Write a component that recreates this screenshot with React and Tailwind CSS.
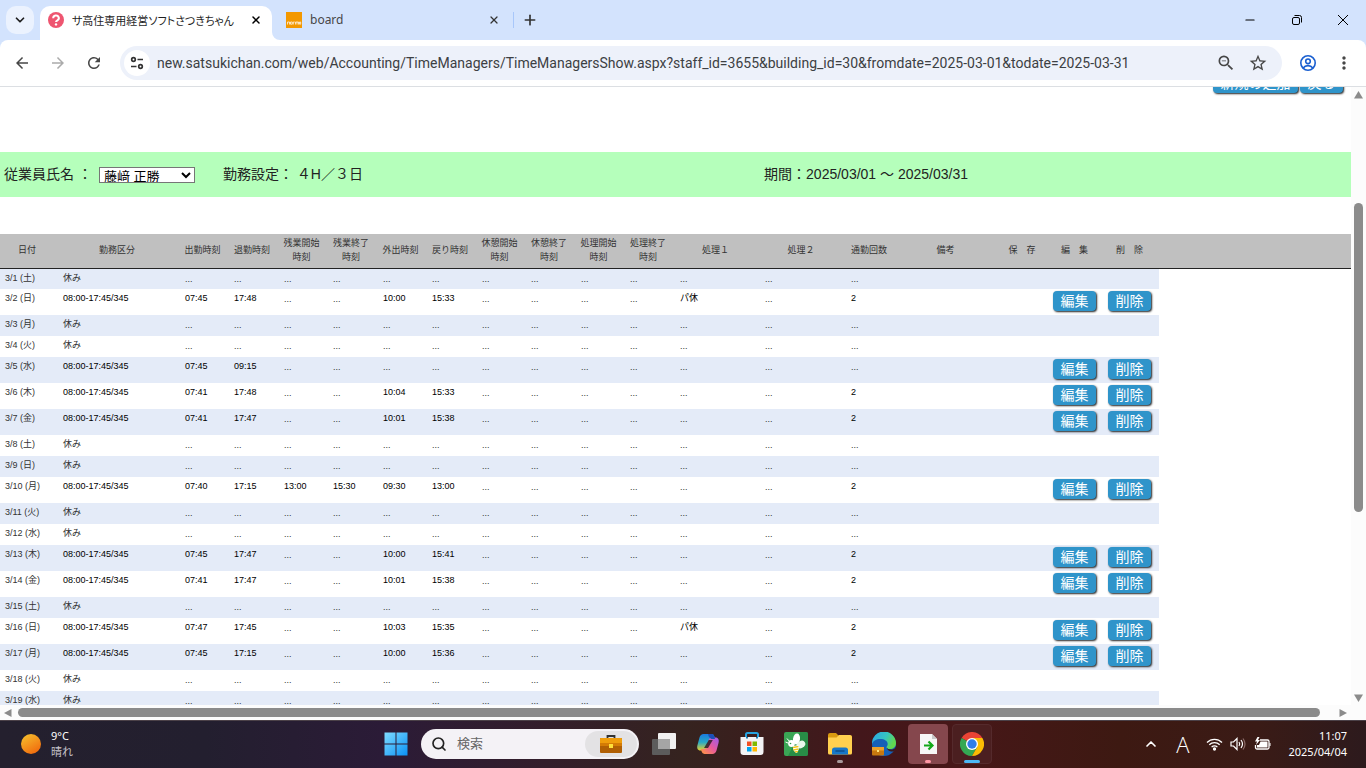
import { useState } from 'react'
import { ChevronDown, ChevronUp, Minus, Plus, Search, X } from 'lucide-react'
import { MdArrowBack, MdArrowForward, MdRefresh, MdZoomOut, MdStarOutline, MdMoreVert } from 'react-icons/md'

const DOTS = '...'
const WORK = '08:00-17:45/345'

// [date, in, out, overtime start, overtime end, leave, back, process 1, commute count]
const WORK_ROWS = [
  ['3/1 (土)'],
  ['3/2 (日)', '07:45', '17:48', '', '', '10:00', '15:33', 'パ休', '2'],
  ['3/3 (月)'],
  ['3/4 (火)'],
  ['3/5 (水)', '07:45', '09:15', '', '', '', '', '', ''],
  ['3/6 (木)', '07:41', '17:48', '', '', '10:04', '15:33', '', '2'],
  ['3/7 (金)', '07:41', '17:47', '', '', '10:01', '15:38', '', '2'],
  ['3/8 (土)'],
  ['3/9 (日)'],
  ['3/10 (月)', '07:40', '17:15', '13:00', '15:30', '09:30', '13:00', '', '2'],
  ['3/11 (火)'],
  ['3/12 (水)'],
  ['3/13 (木)', '07:45', '17:47', '', '', '10:00', '15:41', '', '2'],
  ['3/14 (金)', '07:41', '17:47', '', '', '10:01', '15:38', '', '2'],
  ['3/15 (土)'],
  ['3/16 (日)', '07:47', '17:45', '', '', '10:03', '15:35', 'パ休', '2'],
  ['3/17 (月)', '07:45', '17:15', '', '', '10:00', '15:36', '', '2'],
  ['3/18 (火)'],
  ['3/19 (水)'],
]

const COLUMNS = [
  { label: '日付', width: 'w-[58px]' },
  { label: '勤務区分', width: 'w-[122px]' },
  { label: '出勤時刻', width: 'w-[49px]' },
  { label: '退勤時刻', width: 'w-[50px]' },
  { label: '残業開始時刻', width: 'w-[49px]' },
  { label: '残業終了時刻', width: 'w-[50px]' },
  { label: '外出時刻', width: 'w-[49px]' },
  { label: '戻り時刻', width: 'w-[50px]' },
  { label: '休憩開始時刻', width: 'w-[49px]' },
  { label: '休憩終了時刻', width: 'w-[50px]' },
  { label: '処理開始時刻', width: 'w-[49px]' },
  { label: '処理終了時刻', width: 'w-[50px]' },
  { label: '処理１', width: 'w-[85px]' },
  { label: '処理２', width: 'w-[86px]' },
  { label: '通勤回数', width: 'w-[50px]' },
  { label: '備考', width: 'w-[103px]' },
  { label: '保　存', width: 'w-[50px]' },
  { label: '編　集', width: 'w-[55px]' },
  { label: '削　除', width: 'w-[55px]' },
]

function BlueButton({ children, wide }) {
  return (
    <button
      type="button"
      className={`block h-5 rounded bg-[#2f94ca] text-center text-sm leading-[18px] whitespace-nowrap text-white shadow-[1px_1px_2px_#222] ${wide ? 'w-[85px]' : 'w-[43px]'}`}
    >
      {children}
    </button>
  )
}

function TabBar() {
  return (
    <div className="flex h-10 shrink-0 items-end bg-[#d3e3fd] pl-1.5">
      <button type="button" aria-label="タブを検索" className="mb-1.5 flex size-7 items-center justify-center rounded-[10px] bg-[#ebf2fe]">
        <ChevronDown className="size-3.5 text-[#1f1f1f]" strokeWidth={3} />
      </button>
      <div className="ml-1.5 flex h-[34px] w-[232px] items-center rounded-t-[10px] bg-white pr-2.5 pb-1.5 pl-2">
        <svg className="size-4 shrink-0" viewBox="0 0 16 16">
          <circle cx="8" cy="8" r="8" fill="#ee5570" />
          <path d="M5.2 6.2a2.8 2.6 0 1 1 4.2 2.2c-1 .6-1.4.9-1.4 1.7" fill="none" stroke="#fff" strokeWidth="2" />
          <circle cx="8" cy="12.4" r="1.2" fill="#fff" />
        </svg>
        <span className="ml-2 grow overflow-hidden text-[11px] leading-4 whitespace-nowrap text-[#1f1f1f] [font-feature-settings:'palt']">サ高住専用経営ソフトさつきちゃん</span>
        <button type="button" aria-label="閉じる" className="shrink-0">
          <X className="size-3" strokeWidth={3} />
        </button>
      </div>
      <svg className="size-2 shrink-0" viewBox="0 0 8 8"><path d="M0 0a8 8 0 0 0 8 8H0z" fill="#fff" /></svg>
      <div className="flex h-[34px] w-[226px] items-center pr-1.5 pb-1.5 pl-1.5">
        <svg className="size-4 shrink-0" viewBox="0 0 16 16">
          <rect width="16" height="16" fill="#f39800" />
          <path d="M1.500 12.500v-2.500h2v2.500M4.500 10h1.800v2.200H4.500zM7.300 12.500V10h1.400M9.500 12.500V10h3v2.500M11 10v2.500M13.500 10h1.200v2.200h-1.200z" fill="none" stroke="#fff" strokeWidth=".7" />
        </svg>
        <span className="ml-2 grow font-['Noto_Sans'] text-xs text-[#474747]">board</span>
        <button type="button" aria-label="閉じる" className="shrink-0">
          <X className="size-3 text-[#333]" strokeWidth={2.5} />
        </button>
      </div>
      <div className="mb-3 ml-[7px] h-4 w-px bg-[#a8c7fa]" />
      <button type="button" aria-label="新しいタブ" className="mb-3 ml-2">
        <Plus className="size-4 text-[#333]" strokeWidth={2.5} />
      </button>
      <div className="mb-[13px] ml-auto flex items-center gap-[34px] pr-[17px] text-black">
        <button type="button" aria-label="最小化"><Minus className="size-3.5" strokeWidth={2} /></button>
        <button type="button" aria-label="元に戻す">
          <svg className="size-3" viewBox="0 0 12 12" fill="none" stroke="currentColor">
            <rect x="1.500" y="3.500" width="7" height="7" rx="1.500" />
            <path d="M3.500 1.500h5a2 2 0 0 1 2 2v5" />
          </svg>
        </button>
        <button type="button" aria-label="閉じる">
          <svg className="size-3" viewBox="0 0 12 12" stroke="currentColor"><path d="M1 1l10 10M11 1L1 11" /></svg>
        </button>
      </div>
    </div>
  )
}

function Toolbar() {
  const [url, setUrl] = useState('new.satsukichan.com/web/Accounting/TimeManagers/TimeManagersShow.aspx?staff_id=3655&building_id=30&fromdate=2025-03-01&todate=2025-03-31')
  return (
    <div className="shrink-0 bg-[#d3e3fd]">
      <div className="flex h-[47px] items-center rounded-t-lg border-b border-[#dcdfe3] bg-white pr-3 pl-3 text-[#474747]">
        <button type="button" aria-label="戻る" className="px-px"><MdArrowBack className="size-[18px]" /></button>
        <button type="button" aria-label="進む" className="ml-4 px-px text-[#ababab]"><MdArrowForward className="size-[18px]" /></button>
        <button type="button" aria-label="再読み込み" className="ml-4 px-px"><MdRefresh className="size-[18px]" /></button>
        <div className="ml-4 flex h-[34px] grow items-center rounded-full bg-[#edf1fa] pr-3.5 pl-1">
          <button type="button" aria-label="サイト情報" className="flex size-[26px] shrink-0 items-center justify-center rounded-full bg-white">
            <svg className="size-4" viewBox="0 0 16 16" fill="none" stroke="#333" strokeWidth="1.700">
              <circle cx="4.500" cy="4.500" r="1.800" />
              <path d="M8.500 4.500H14M2 11.500h5.500" />
              <circle cx="11.500" cy="11.500" r="1.800" />
            </svg>
          </button>
          <input
            aria-label="アドレス"
            value={url}
            onChange={(e) => setUrl(e.target.value)}
            className="ml-[7px] min-w-0 grow bg-transparent font-['Roboto'] text-sm text-[#3c4043] outline-none"
          />
          <MdZoomOut className="size-5" />
          <MdStarOutline className="ml-3 size-5" />
        </div>
        <button type="button" aria-label="アカウント" className="ml-[18px]">
          <svg className="size-4" viewBox="0 0 16 16" fill="none" stroke="#1a5fd0" strokeWidth="1.600">
            <circle cx="8" cy="8" r="7.200" />
            <circle cx="8" cy="6.300" r="2.300" />
            <path d="M3.200 13c1.200-1.700 2.900-2.400 4.800-2.400s3.600.7 4.800 2.400" />
          </svg>
        </button>
        <button type="button" aria-label="メニュー" className="ml-[18px]"><MdMoreVert className="size-5" /></button>
      </div>
    </div>
  )
}

function TimeTable() {
  return (
    <table className="w-full min-w-[1159px] table-fixed border-collapse text-[9px] leading-[14px] text-[#333]">
      <colgroup>
        {COLUMNS.map((c) => <col key={c.label} className={c.width} />)}
        <col />
      </colgroup>
      <thead>
        <tr className="h-[34px] border-b border-[#222] bg-[#c0c0c0]">
          {COLUMNS.map((c) => <th key={c.label} className="p-0 pr-1 pb-0.5 text-center font-normal"><span className="mx-auto block w-9">{c.label}</span></th>)}
          <th />
        </tr>
      </thead>
      <tbody>
        {WORK_ROWS.map(([date, ...v]) => {
          const off = v.length === 0
          const [start, end, otStart, otEnd, leave, back, process, count] = v
          const cells = [start, end, otStart, otEnd, leave, back, '', '', '', '', process, '', count]
          return (
            <tr key={date} className={`align-top odd:bg-[#e4ebf8] ${off ? 'h-[21px]' : 'h-[26px]'}`}>
              <td className="pt-0.5 pl-[5px] whitespace-nowrap">{date}</td>
              <td className={`pt-0.5 pl-[5px] ${off ? '' : 'text-black'}`}>{off ? '休み' : WORK}</td>
              {cells.map((c, i) => (
                <td key={i} className={`pl-[5px] ${c ? 'pt-0.5 text-black' : 'pt-[3px]'}`}>{c || DOTS}</td>
              ))}
              <td />
              <td />
              <td className="pt-0.5 pl-1">{!off && <BlueButton>編集</BlueButton>}</td>
              <td className="pt-0.5 pl-1">{!off && <BlueButton>削除</BlueButton>}</td>
              <td className="bg-white" />
            </tr>
          )
        })}
      </tbody>
    </table>
  )
}

function Page() {
  return (
    <div className="flex min-h-0 grow bg-white">
      <div className="flex min-w-0 grow flex-col">
        <div className="min-h-0 grow overflow-hidden font-['Liberation_Sans','Noto_Sans_CJK_JP',sans-serif] text-sm text-[#222]">
          <div className="-mt-3.5 flex h-[79px] justify-end gap-0.5 pr-2">
            <BlueButton wide>新規の追加</BlueButton>
            <BlueButton>戻る</BlueButton>
          </div>
          <div className="flex h-[45px] items-center bg-[#b5ffbb] px-1 pb-0.5 whitespace-nowrap">
            <div className="flex w-[56%] items-center">
              <label htmlFor="staff">従業員氏名 ：</label>
              <select id="staff" defaultValue="1" className="mt-0.5 ml-[7px] h-4 w-24 border border-[#767676] bg-white text-[13px] leading-[14px] text-black">
                <option value="1">藤﨑 正勝</option>
              </select>
              <span className="ml-7">勤務設定： ４H／３日</span>
            </div>
            <div className="pl-2">期間：2025/03/01 ～ 2025/03/31</div>
          </div>
          <div className="mt-[37px]">
            <TimeTable />
          </div>
        </div>
        {/* horizontal scrollbar */}
        <div className="flex h-[15px] shrink-0 items-center bg-[#fcfcfc] px-1">
          <svg className="size-2 shrink-0" viewBox="0 0 8 8"><path d="M7.500 0v8L0 4z" fill="#8b8b8b" /></svg>
          <div className="mr-[19px] ml-1.5 h-[9px] grow rounded-full bg-[#8b8b8b]" />
          <svg className="size-2 shrink-0" viewBox="0 0 8 8"><path d="M.5 0v8L8 4z" fill="#8b8b8b" /></svg>
        </div>
      </div>
      {/* vertical scrollbar */}
      <div className="flex w-[15px] shrink-0 flex-col items-center bg-[#fcfcfc] pt-1 pb-[18px]">
        <svg className="h-2 w-[9px] shrink-0" viewBox="0 0 9 8"><path d="M0 7.500h9L4.500 0z" fill="#8b8b8b" /></svg>
        <div className="flex w-[9px] grow flex-col">
          <div className="grow-4" />
          <div className="h-[52%] rounded-full bg-[#8b8b8b]" />
          <div className="grow-7" />
        </div>
        <svg className="h-2 w-[9px] shrink-0" viewBox="0 0 9 8"><path d="M0 .5h9L4.500 8z" fill="#8b8b8b" /></svg>
      </div>
    </div>
  )
}

function CopilotIcon() {
  return (
    <svg className="size-6" viewBox="0 0 24 24">
      <defs>
        <linearGradient id="cpA" x1="0" y1="0" x2="0" y2="1"><stop stopColor="#1a7be0" /><stop offset=".5" stopColor="#28a9c6" /><stop offset="1" stopColor="#e8d12c" /></linearGradient>
        <linearGradient id="cpB" x1="1" y1="0" x2="0" y2="1"><stop stopColor="#9a5cf0" /><stop offset=".5" stopColor="#e85a9c" /><stop offset="1" stopColor="#ff9a3c" /></linearGradient>
      </defs>
      <path d="M14 2h1.500a3 3 0 0 1 2.800 2.200L19 7h-3c-1.500 0-2.300.7-2.700 2l-2 7c-.5 1.600-1.500 2.500-3 2.500H4.500C1.500 18.500.7 16 1.500 13l2-7.500C4.200 3.200 5.500 2 7.500 2z" fill="url(#cpA)" />
      <path d="M10 22H8.500a3 3 0 0 1-2.800-2.200L5 17h3c1.500 0 2.300-.7 2.700-2l2-7c.5-1.600 1.500-2.500 3-2.500h3.800c3 0 3.800 2.500 3 5.500l-2 7.500c-.7 2.300-2 3.500-4 3.500z" fill="url(#cpB)" />
      <path d="M12.800 8h4L12 16H8z" fill="#2b2024" opacity=".85" />
      <path d="M12 2h3.500a3 3 0 0 1 2.800 2.200L19 7h-3.500C13 6 12.500 4 12 2z" fill="#1c4fb8" />
    </svg>
  )
}

function StoreIcon() {
  return (
    <svg className="size-6" viewBox="0 0 24 24">
      <path d="M6 6V2.500A1.500 1.500 0 0 1 7.500 1h9A1.500 1.500 0 0 1 18 2.500V6" fill="none" stroke="#27a3e0" strokeWidth="2" />
      <path d="M.5 5h23v15a3 3 0 0 1-3 3h-17a3 3 0 0 1-3-3z" fill="#f3f3f5" />
      <path d="M6 5h2v1.500H6zM16 5h2v1.500h-2z" fill="#1b7fb8" />
      <path d="M7 9.500h4.500V14H7z" fill="#f25022" />
      <path d="M12.500 9.500H17V14h-4.500z" fill="#7fba00" />
      <path d="M7 15h4.500v4.500H7z" fill="#00a4ef" />
      <path d="M12.500 15H17v4.500h-4.500z" fill="#ffb900" />
    </svg>
  )
}

function BeeIcon() {
  return (
    <svg className="size-6" viewBox="0 0 24 24">
      <rect width="24" height="24" rx="2" fill="#3aa655" />
      <path d="M16 0h6a2 2 0 0 1 2 2v20a2 2 0 0 1-2 2H4z" fill="#1c7d3c" opacity=".6" />
      <ellipse cx="12.500" cy="7" rx="3.500" ry="5.500" fill="#fff" transform="rotate(8 12.500 7)" />
      <ellipse cx="17" cy="12.500" rx="4.500" ry="3.500" fill="#e9f7ec" transform="rotate(-30 17 12.500)" />
      <circle cx="7.500" cy="11.500" r="3.400" fill="#fff" />
      <path d="M3 6.500l2.500 3M1.500 10l2.500 1" stroke="#fff" strokeWidth="1" />
      <circle cx="6.500" cy="11.500" r=".8" fill="#2f9a4c" />
      <path d="M9 14l5.500-1c1.500 3-.5 6-1.500 8-3-1-4.500-4-4-7z" fill="#fff" />
      <path d="M9 15.500l5.500-1M9.500 18l5-1M11 20l3-.7" stroke="#f5c518" strokeWidth="1.300" />
    </svg>
  )
}

function FolderIcon() {
  return (
    <svg className="size-6" viewBox="0 0 24 24">
      <path d="M0 3a2 2 0 0 1 2-2h6l2.500 2.500H22a2 2 0 0 1 2 2V10H0z" fill="#d99a10" />
      <path d="M0 5.500h8.500L11 3h11a2 2 0 0 1 2 2v16a1.500 1.500 0 0 1-1.500 1.500h-21A1.500 1.500 0 0 1 0 21z" fill="#ffd04f" />
      <path d="M4 22.500V18a2.500 2.500 0 0 1 2.500-2.500h11A2.500 2.500 0 0 1 20 18v4.500z" fill="#1777c8" />
      <path d="M8 19h8" stroke="#0f4f8c" strokeWidth="1.500" strokeLinecap="round" />
    </svg>
  )
}

function EdgeIcon() {
  return (
    <svg className="size-6" viewBox="0 0 24 24">
      <defs>
        <linearGradient id="edA" x1="0" y1="0" x2="1" y2=".4"><stop stopColor="#2aa5e8" /><stop offset=".6" stopColor="#36c5c0" /><stop offset="1" stopColor="#62d84e" /></linearGradient>
      </defs>
      <circle cx="12" cy="12" r="12" fill="#1560b8" />
      <path d="M0 12a12 12 0 0 1 24-1c0 4-3 6-6 6-2 0-3.500-.8-3.500-1.800 0-.8 1.200-1.200 1.200-3.200C15.700 9 12.500 7 8.500 7 4 7 1 9 0 12z" fill="url(#edA)" />
      <path d="M15 15.500c0 1 1.500 2 4 2 1.500 0 3-.5 4-1.300L24 15c-.5 2-1.500 3.500-2.500 4.500-3 .5-6.500-1-6.500-4z" fill="#3b1a1c" />
      <rect y="15" width="12" height="8.500" rx="1" fill="#c8780f" />
      <rect y="15" width="12" height="3.500" fill="#eba12b" />
      <rect x="5" y="18" width="2" height="2" fill="#ffe27a" />
    </svg>
  )
}

function ChromeIcon() {
  return (
    <svg className="size-6" viewBox="0 0 24 24">
      <path d="M12 12L1.600 6A12 12 0 0 1 22.400 6z" fill="#ea4335" />
      <path d="M12 12L1.600 6A12 12 0 0 0 12 24l5.200-9z" fill="#34a853" />
      <path d="M12 6h10.400A12 12 0 0 1 12 24l5.200-9z" fill="#fbbc04" />
      <circle cx="12" cy="12" r="6" fill="#fff" />
      <circle cx="12" cy="12" r="4.700" fill="#2f7de9" />
    </svg>
  )
}

function TaskButton({ label, mark, className = '', children }) {
  return (
    <button type="button" aria-label={label} className="relative flex h-12 w-11 items-center justify-center">
      <span className={`flex size-10 items-center justify-center rounded ${className}`}>{children}</span>
      {mark && <span className={`absolute bottom-[5px] h-[3px] rounded-full ${mark}`} />}
    </button>
  )
}

function Taskbar() {
  return (
    <div className="grid h-12 shrink-0 grid-cols-[1fr_auto_1fr] items-center bg-[linear-gradient(90deg,#24202e_0%,#231f2f_15%,#2b1b37_28%,#331e2b_40%,#35231f_50%,#43171b_63%,#471718_70%,#3d1912_82%,#3a1b16_92%,#2d1a1d_100%)] font-['Noto_Sans','Noto_Sans_CJK_JP',sans-serif] text-[11px] text-white shadow-[inset_0_1px_0_#4b4148]">
      <div className="flex items-center gap-2.5 pl-[21px] leading-4">
        <svg className="size-5" viewBox="0 0 20 20">
          <defs><linearGradient id="sun" x1=".2" y1="0" x2=".8" y2="1"><stop stopColor="#f5bd2c" /><stop offset="1" stopColor="#f0660c" /></linearGradient></defs>
          <circle cx="10" cy="10" r="10" fill="url(#sun)" />
        </svg>
        <div>
          <div>9°C</div>
          <div className="text-[#c9c5cc]">晴れ</div>
        </div>
      </div>
      <div className="flex items-center pl-3">
        <button type="button" aria-label="スタート">
          <svg className="size-6" viewBox="0 0 24 24">
            <defs><linearGradient id="win" x1="0" y1="0" x2="1" y2="1"><stop stopColor="#7fdcff" /><stop offset="1" stopColor="#0a91f5" /></linearGradient></defs>
            <path d="M.5.5h11v11H.5zM12.500.5h11v11h-11zM.5 12.500h11v11H.5zM12.500 12.500h11v11h-11z" fill="url(#win)" />
          </svg>
        </button>
        <div className="mr-[3px] ml-[13px] flex h-[30px] w-[218px] items-center rounded-full bg-[#f4f2f6] pr-0.5 pl-2.5">
          <Search className="size-4 shrink-0 text-[#222]" strokeWidth={2.5} />
          <input aria-label="検索" placeholder="検索" className="ml-2.5 w-0 grow bg-transparent text-[13px] text-black outline-none placeholder:text-[#666]" />
          <span className="flex h-[26px] w-[52px] items-center justify-center rounded-full bg-[#e3e2e4]">
            <svg className="h-5 w-[22px]" viewBox="0 0 22 20">
              <path d="M7.500 4V2h7v2" fill="none" stroke="#333" strokeWidth="1.800" />
              <rect y="4" width="22" height="15" rx="1" fill="#b05f04" />
              <path d="M1 4h20a1 1 0 0 1 1 1v7H0V5a1 1 0 0 1 1-1z" fill="#ef9d0c" />
              <path d="M0 9h22v3H0z" fill="#d47b05" />
              <rect x="9" y="10" width="4" height="4" fill="#ffe03a" />
            </svg>
          </span>
        </div>
        <TaskButton label="タスク ビュー">
          <svg className="size-6" viewBox="0 0 24 24">
            <rect x="6" y="1" width="18" height="16" rx="1" fill="#f1f1f1" />
            <rect y="7" width="18" height="16" rx="1" fill="#5c5c5c" />
            <path d="M6 7h12v10H6z" fill="#a5a5a5" />
          </svg>
        </TaskButton>
        <TaskButton label="Copilot"><CopilotIcon /></TaskButton>
        <TaskButton label="Microsoft Store"><StoreIcon /></TaskButton>
        <TaskButton label="Bee"><BeeIcon /></TaskButton>
        <TaskButton label="エクスプローラー" mark="w-1.5 bg-[#a8999b]"><FolderIcon /></TaskButton>
        <TaskButton label="Edge"><EdgeIcon /></TaskButton>
        <TaskButton label="リモート" className="bg-[#85474d]" mark="w-1.5 bg-[#ff98a6]">
          <svg className="h-5 w-[17px]" viewBox="0 0 17 20">
            <path d="M0 0h12l5 5v15H0z" fill="#f7f7f7" />
            <path d="M12 0l5 5h-5z" fill="#c9c9c9" />
            <path d="M4 11.500h7M8.500 7.500l4 4-4 4" fill="none" stroke="#12a818" strokeWidth="2.200" />
          </svg>
        </TaskButton>
        <TaskButton label="Chrome" className="border border-[#552a2c] bg-[#4b1f20]" mark="w-4 bg-[#4cb8f5]"><ChromeIcon /></TaskButton>
      </div>
      <div className="flex items-center justify-end pr-[19px]">
        <ChevronUp className="size-4" strokeWidth={2.5} />
        <span className="ml-[17px] font-['Open_Sans'] text-[22px] leading-6 font-light">A</span>
        <svg className="ml-[17px] h-4 w-[17px]" viewBox="0 0 17 16" fill="none" stroke="#fff" strokeWidth="1.300">
          <path d="M1 6.500a10.500 10.500 0 0 1 15 0M3.300 8.800a7.300 7.300 0 0 1 10.400 0M5.600 11.100a4.100 4.100 0 0 1 5.800 0" />
          <circle cx="8.500" cy="13" r="1" fill="#fff" />
        </svg>
        <svg className="ml-[7px] size-4" viewBox="0 0 16 16" fill="none" stroke="#fff" strokeWidth="1.200">
          <path d="M1 6v4h2.500L7 13.500v-11L3.500 6z" />
          <path d="M9 6q1.500 2 0 4M11 4q3 4 0 8" />
          <path d="M13 2.500q4 5.500 0 11" stroke="#8a6a66" />
        </svg>
        <svg className="ml-2 h-4 w-[17px]" viewBox="0 0 17 16">
          <path d="M6 4h7.500a1.500 1.500 0 0 1 1.500 1.500v6a1.500 1.500 0 0 1-1.500 1.500H3a1.500 1.500 0 0 1-1.500-1.500V9" fill="none" stroke="#fff" strokeWidth="1.300" />
          <path d="M6.500 5.500h7v6H3V9h2zM15.500 7h1v3h-1zM3.500 1L1 5.500h2L2 9l4-5H4l1.500-3z" fill="#fff" />
        </svg>
        <div className="ml-[17px] text-right leading-4">
          <div>11:07</div>
          <div>2025/04/04</div>
        </div>
      </div>
    </div>
  )
}

export default function App() {
  return (
    <div className="flex h-screen flex-col overflow-hidden bg-white font-['Noto_Sans_CJK_JP',sans-serif]">
      <TabBar />
      <Toolbar />
      <Page />
      <Taskbar />
    </div>
  )
}
